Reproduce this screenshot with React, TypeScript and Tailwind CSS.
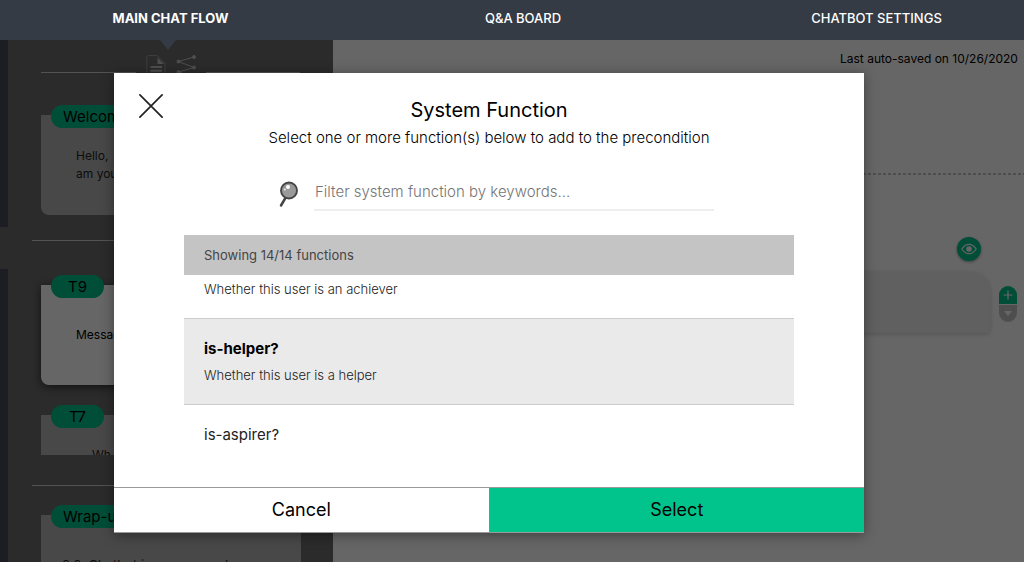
import React from "react";

function Pill({ children }: { children: React.ReactNode }) {
  return (
    <span className="absolute -top-[10px] left-[10px] flex h-[23px] min-w-[53px] items-center justify-center whitespace-nowrap rounded-full bg-[#00c48c] px-3 text-[15px] leading-5 text-black">
      {children}
    </span>
  );
}

function Divider() {
  return <div className="ml-6 h-px shrink-0 bg-[#d0d0d0]" />;
}

function Sidebar() {
  return (
    <aside className="flex w-[333px] shrink-0 overflow-hidden bg-[#6b6b6b]">
      <div className="flex w-2 flex-col gap-[42px]">
        <div className="h-[187px] bg-[#494b57]" />
        <div className="flex-1 bg-[#494b57]" />
      </div>
      <div className="flex flex-1 flex-col pr-8">
        <div className="ml-[33px] mr-px mt-[14px] flex h-6 shrink-0 items-start gap-[10px]">
          <span className="mt-[18px] h-px flex-1 bg-[#d0d0d0]" />
          <svg className="h-6 w-5 shrink-0" viewBox="0 0 20 24" fill="none" stroke="#c4c4c4">
            <path d="M.8 22V3.500Q.8 1.500 2.500 1.500H11l8 7.500V22Q19 23.500 17.500 23.500H2.500Q.8 23.500.8 22Z" stroke="#999" strokeWidth="1" />
            <path d="M11.500 3.500v6.500H18Z" fill="#c4c4c4" stroke="none" />
            <path d="M4.500 13h11.500M4.500 16.700h11.500M4.500 20.400h11.500" strokeWidth="2" />
          </svg>
          <svg className="h-6 w-5 shrink-0" viewBox="0 0 20 24" fill="#c4c4c4" stroke="#c4c4c4">
            <path d="M18 3 2.500 7.500l15.500 6L2.500 18l15.500 5" fill="none" strokeWidth="1" />
            <circle cx="18" cy="3" r="1.500" />
            <circle cx="2.500" cy="7.500" r="1.500" />
            <circle cx="18" cy="13.500" r="1.500" />
            <circle cx="2.500" cy="18" r="1.500" />
          </svg>
          <span className="mt-[18px] h-px flex-1 bg-[#d0d0d0]" />
        </div>
        <section className="relative ml-[33px] mt-[37px] h-[100px] shrink-0 rounded-b-lg bg-[#b4b4b4] pl-[35px] pt-8 text-xs leading-[18px] text-[#222]">
          <Pill>Welcome</Pill>
          <p>Hello,<br />am you</p>
        </section>
        <div className="mt-[25px]"><Divider /></div>
        <section className="relative ml-[33px] mt-11 flex h-[100px] shrink-0 items-center rounded-b-lg bg-white pl-[35px] text-xs text-black shadow-[0_2px_8px_rgba(0,0,0,0.6)]">
          <Pill>T9</Pill>
          <p>Message</p>
        </section>
        <section className="relative ml-[33px] mt-[30px] h-10 shrink-0 bg-[#b4b4b4]">
          <Pill>T7</Pill>
          <p className="h-10 overflow-hidden pl-[51px] pt-8 text-xs leading-4 text-[#222]">Wh</p>
        </section>
        <div className="mt-[30px]"><Divider /></div>
        <section className="relative ml-[33px] mt-[29px] flex-1 bg-[#b4b4b4] pl-[21px] pt-[42px] text-[13px] leading-4 text-[#222]">
          <Pill>Wrap-up</Pill>
          <p>2.0. Chatbot is recommend</p>
        </section>
      </div>
    </aside>
  );
}

function Canvas() {
  return (
    <main className="flex min-w-0 flex-1 flex-col overflow-hidden bg-white">
      <p className="mt-3 w-[184px] self-end whitespace-nowrap text-xs leading-[14px] text-black">
        Last auto-saved on 10/26/2020
      </p>
      <div className="mt-[107px] h-[2px] bg-[repeating-linear-gradient(90deg,#c4c4c4_0px,#c4c4c4_3px,transparent_3px,transparent_5px)]" />
      <button aria-label="Preview" className="mr-[43px] mt-[62px] flex size-6 items-center justify-center self-end rounded-full bg-[#00c48c] shadow-[0_1px_3px_rgba(0,0,0,0.4)]">
        <svg className="h-3 w-4" viewBox="0 0 16 12" fill="none" stroke="white" strokeWidth="1.200">
          <path d="M.8 6Q4 1.300 8 1.300T15.200 6Q12 10.700 8 10.700T.8 6Z" />
          <circle cx="8" cy="6" r="2.800" fill="white" stroke="none" />
        </svg>
      </button>
      <div className="mt-[11px] flex gap-[9px] pr-[7px]">
        <div className="h-[61px] flex-1 rounded-br rounded-tr-[20px] bg-[#f0f0f0] shadow-[0_1px_5px_rgba(0,0,0,0.2)]" />
        <div className="mt-[14px] flex h-9 w-[18px] flex-col gap-px overflow-hidden rounded-full">
          <button aria-label="Add" className="flex h-[18px] items-center justify-center bg-[#00c48c]">
            <svg className="size-[10px]" viewBox="0 0 10 10" stroke="white" strokeWidth="1.200"><path d="M5 .5v9M.5 5h9" /></svg>
          </button>
          <button aria-label="More" className="flex flex-1 items-center justify-center bg-[#c4c4c4]">
            <svg className="h-[5px] w-2" viewBox="0 0 8 5" fill="white"><path d="M0 0h8L4 5Z" /></svg>
          </button>
        </div>
      </div>
    </main>
  );
}

function Dialog() {
  return (
    <div role="dialog" aria-labelledby="dialog-title" className="relative flex w-full max-w-[750px] flex-col bg-white text-black shadow-[0_2px_12px_rgba(0,0,0,0.4)]">
      <button aria-label="Close" className="absolute left-[25px] top-[21px] size-6">
        <svg className="size-full" viewBox="0 0 24 24" stroke="#222" strokeWidth="1.700" strokeLinecap="round"><path d="m.9.900 22.200 22.200M23.100.9.900 23.100" /></svg>
      </button>
      <h2 id="dialog-title" className="mt-6 text-center text-xl leading-[26px]">System Function</h2>
      <p className="mt-1 text-center text-[15px] font-light leading-[22px]">
        Select one or more function(s) below to add to the precondition
      </p>
      <div className="ml-[165px] mr-[150px] mt-6 flex items-start gap-3">
        <svg className="mt-2 h-[27px] w-[23px] shrink-0" viewBox="0 0 23 27">
          <path d="m7 16-5 8.500" stroke="#454545" strokeWidth="2.500" strokeLinecap="round" />
          <circle cx="10" cy="9.500" r="8" fill="#999" stroke="#454545" strokeWidth="1.900" />
          <circle cx="9" cy="6" r="2" fill="white" />
          <circle cx="5.800" cy="8.500" r="1" fill="#eee" />
        </svg>
        <input aria-label="Filter system function by keywords" placeholder="Filter system function by keywords..." className="h-[38px] min-w-0 flex-1 border-b-2 border-[#eee] px-px text-[15px] font-light text-black outline-none placeholder:text-[#757575]" />
      </div>
      <div className="mx-[70px] mt-6 flex flex-col">
        <div className="flex h-10 items-center bg-[#c4c4c4] px-5 text-[13px] leading-4 text-[#444]">Showing 14/14 functions</div>
        <ul className="h-[212px] overflow-hidden">
          <li className="h-11 border-b border-[#ccc] px-5 pt-1.5 text-[13px] font-light leading-4 text-[#222]">Whether this user is an achiever</li>
          <li className="h-[86px] border-b border-[#ccc] bg-[#eaeaea] px-5 pt-5">
            <p className="text-[15px] font-bold leading-5">is-helper?</p>
            <p className="mt-2 text-[13px] font-light leading-4 text-[#222]">Whether this user is a helper</p>
          </li>
          <li className="px-5 pt-5">
            <p className="text-[15px] leading-5 text-[#222]">is-aspirer?</p>
          </li>
        </ul>
      </div>
      <div className="flex h-[46px] border-y border-[#999] text-lg leading-6">
        <button className="flex-1 border-r border-[#888]">Cancel</button>
        <button className="flex-1 bg-[#00c48c]">Select</button>
      </div>
    </div>
  );
}

export default function App() {
  return (
    <div className="flex h-screen flex-col overflow-hidden font-['Inter','Liberation_Sans',sans-serif]">
      <header className="relative z-20 h-10 shrink-0 bg-[#343b44] text-[13px] leading-4 text-white">
        <nav className="grid h-full grid-cols-[341fr_364fr_319fr]">
          <a href="#flow" className="relative flex items-center justify-center pb-[5px] font-bold">
            MAIN CHAT FLOW
            <svg className="absolute left-1/2 top-10 -ml-[11px] h-[10px] w-4" viewBox="0 0 16 10" fill="#343b44"><path d="M0 0h16L8 10Z" /></svg>
          </a>
          <a href="#board" className="flex items-center justify-center pb-[5px] font-medium">Q&amp;A BOARD</a>
          <a href="#settings" className="flex items-center justify-center pb-[5px] pl-6 font-medium">CHATBOT SETTINGS</a>
        </nav>
      </header>
      <div className="relative flex min-h-0 flex-1">
        <Sidebar />
        <Canvas />
        <div className="absolute inset-0 flex items-start justify-center bg-black/60 pr-[46px] pt-[33px]">
          <Dialog />
        </div>
      </div>
    </div>
  );
}
